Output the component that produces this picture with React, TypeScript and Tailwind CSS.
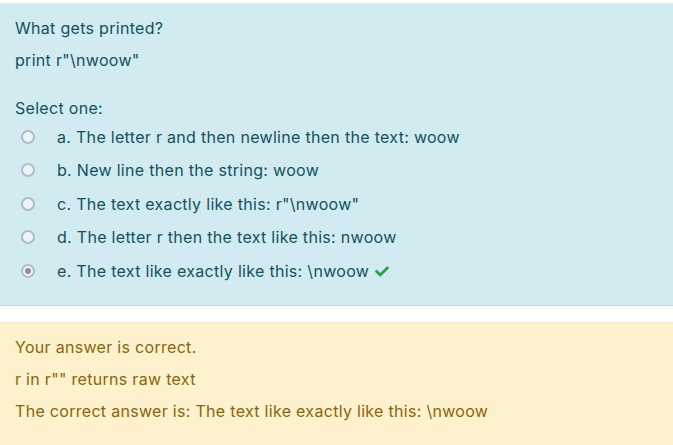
import React from "react";

const font = { fontFamily: "Inter, 'Noto Sans', sans-serif" };

function Radio({ checked }: { checked?: boolean }) {
  return (
    <span className="flex h-[14px] w-[14px] items-center justify-center rounded-full border-2 border-[#b3bcc2] bg-[#eef5f8]">
      {checked && <span className="h-[6px] w-[6px] rounded-full bg-[#8a9297]" />}
    </span>
  );
}

const options = [
  "a. The letter r and then newline then the text: woow",
  "b. New line then the string: woow",
  'c. The text exactly like this: r"\\nwoow"',
  "d. The letter r then the text like this: nwoow",
  "e. The text like exactly like this: \\nwoow",
];

export default function App() {
  return (
    <div className="min-h-[445px] w-[673px] bg-white pt-[3px] text-[16px] tracking-[0.3px]" style={font}>
      <div className="border-y border-t-[#e3e6e8] border-b-[#b9dde5] bg-[#d1ebf0] pb-[17px] pl-[15px] pt-[8px] text-[#115262]">
        <div className="leading-[32px]">What gets printed?</div>
        <div className="leading-[32px]">print r"\nwoow"</div>
        <div className="mt-[20px] leading-[24px]">Select one:</div>
        <div className="flex flex-col">
          {options.map((o, i) => (
            <div key={i} className="flex h-[33.5px] items-center">
              <span className="ml-[6px] mr-[22px]">
                <Radio checked={i === 4} />
              </span>
              <span>{o}</span>
              {i === 4 && (
                <svg className="ml-[6px]" width="14" height="12" viewBox="0 0 512 420">
                  <path
                    fill="#2aa44a"
                    d="M173.9 409.4L7.5 243c-10-10-10-26.2 0-36.2l36.2-36.2c10-10 26.2-10 36.2 0L192 282.7 432.1 42.6c10-10 26.2-10 36.2 0l36.2 36.2c10 10 10 26.2 0 36.2L210.1 409.4c-10 10-26.2 10-36.2 0z"
                  />
                </svg>
              )}
            </div>
          ))}
        </div>
      </div>
      <div className="mt-[16px] border-t border-[#fbe9b7] bg-[#fef1cd] pb-[18px] pl-[15px] pt-[8px] text-[#8b6508]">
        <div className="leading-[32px]">Your answer is correct.</div>
        <div className="leading-[32px]">r in r"" returns raw text</div>
        <div className="leading-[32px]">The correct answer is: The text like exactly like this: \nwoow</div>
      </div>
    </div>
  );
}
